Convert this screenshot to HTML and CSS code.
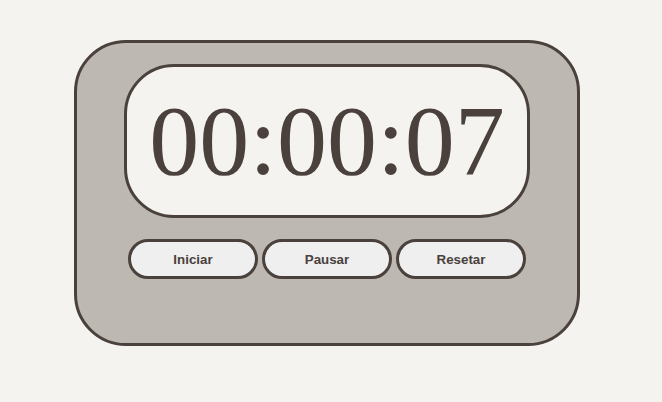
FILE: index.html
```html
<!DOCTYPE html>
<html lang="pt">
<head>
<meta charset="utf-8">
<title>Cronômetro</title>
<link rel="stylesheet" href="styles.css">
</head>
<body>
<main class="stage">
  <section class="timer">
    <div class="display">00:00:07</div>
    <div class="controls">
      <button class="btn">Iniciar</button>
      <button class="btn">Pausar</button>
      <button class="btn">Resetar</button>
    </div>
  </section>
</main>
</body>
</html>
```
FILE: styles.css
```css
html, body {
  margin: 0;
  padding: 0;
  background: #f4f3ef;
}
.stage {
  padding: 40px 0 0 74px;
}
.timer {
  box-sizing: border-box;
  width: 506px;
  height: 306px;
  background: #bdb8b2;
  border: 3px solid #4a413c;
  border-radius: 52px;
  padding-top: 21px;
  display: flex;
  flex-direction: column;
  align-items: center;
}
.display {
  box-sizing: border-box;
  width: 406px;
  height: 154px;
  background: #f4f3ef;
  border: 3px solid #4a413c;
  border-radius: 50px;
  display: flex;
  align-items: center;
  justify-content: center;
  font-family: "Liberation Serif", "Times New Roman", serif;
  font-size: 100px;
  color: #4a413c;
  line-height: 1;
}
.controls {
  margin-top: 21px;
  display: flex;
  gap: 4px;
}
.btn {
  box-sizing: border-box;
  width: 130px;
  height: 40px;
  background: #efefef;
  border: 3px solid #4a413c;
  border-radius: 20px;
  font-family: "Liberation Sans", Arial, sans-serif;
  font-weight: bold;
  font-size: 13.333px;
  color: #4a413c;
  padding: 0;
}
```
